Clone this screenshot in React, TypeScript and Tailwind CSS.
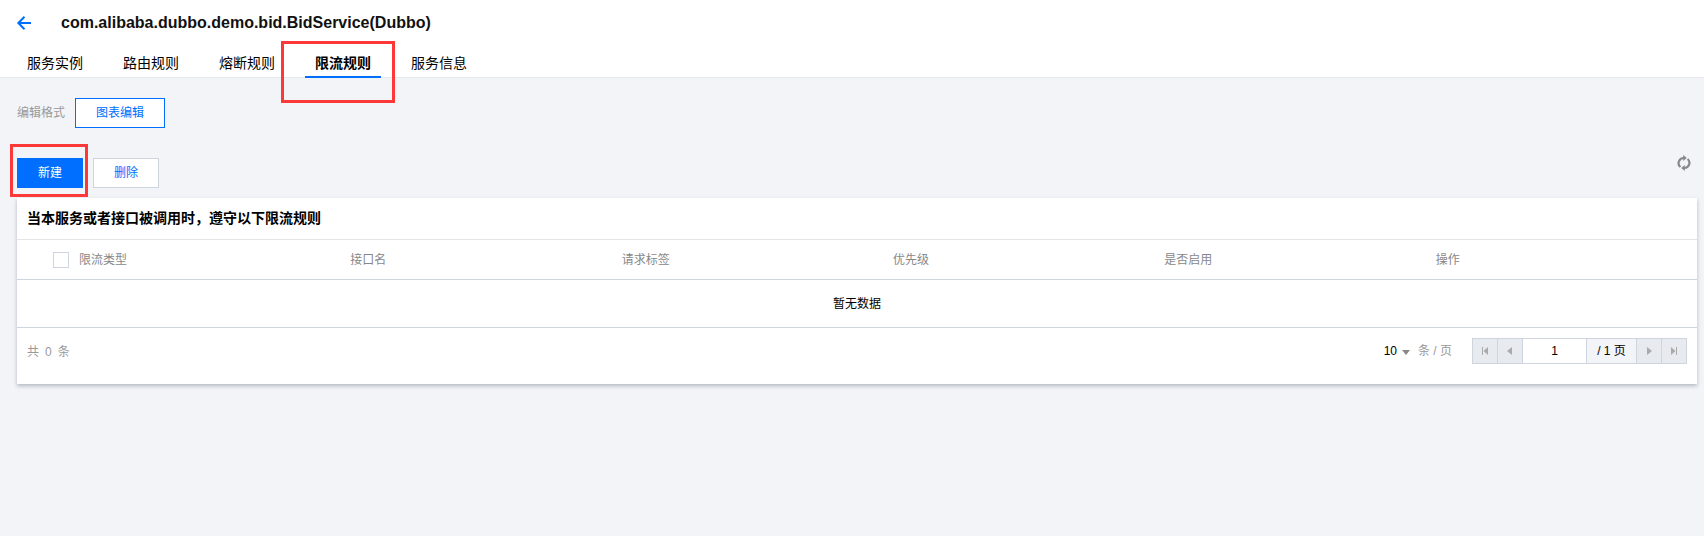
import type { ReactNode } from "react";

const tabs = ["服务实例", "路由规则", "熔断规则", "限流规则", "服务信息"];
const columns = ["限流类型", "接口名", "请求标签", "优先级", "是否启用", "操作"];

function BackIcon() {
  return (
    <svg width="16" height="16" viewBox="0 0 16 16" fill="none" stroke="#006eff" strokeWidth="2">
      <path d="M8.500 1.700 2.300 8l6.200 6.300M2 8h13" />
    </svg>
  );
}

function RefreshIcon() {
  return (
    <svg width="14" height="16" viewBox="0 0 14 16" fill="none" stroke="#888888" strokeWidth="2.2">
      <path d="M3.400 12A5.100 5.100 0 0 1 6.800 3M10.600 4A5.100 5.100 0 0 1 7.200 13" />
      <path d="M6.200 0v6l3.600-3zM7.800 10v6l-3.600-3z" fill="#888888" stroke="none" />
    </svg>
  );
}

function PagerCell({ className, children }: { className: string; children: ReactNode }) {
  return (
    <div className={`flex h-full items-center justify-center border-r border-[#cfd5de] ${className}`}>
      {children}
    </div>
  );
}

function Arrow({ path }: { path: string }) {
  return (
    <svg width="8" height="8" viewBox="0 0 8 8" fill="#aaaaaa">
      <path d={path} />
    </svg>
  );
}

export default function App() {
  return (
    <div className="relative h-[536px] w-[1704px] overflow-hidden bg-[#f2f4f8] font-['Liberation_Sans','Noto_Sans_CJK_SC',sans-serif] text-xs text-black">
      <header className="flex h-[78px] flex-col justify-between border-b border-[#e5e8ed] bg-white">
        <div className="flex h-[45px] items-center pl-4">
          <BackIcon />
          <h1 className="ml-[29px] text-base font-bold leading-6 text-[#111]">
            com.alibaba.dubbo.demo.bid.BidService(Dubbo)
          </h1>
        </div>
        <nav className="-mb-px flex gap-5 pl-[17px] text-sm">
          {tabs.map((tab) => (
            <div
              key={tab}
              className={
                tab === "限流规则"
                  ? "h-[31px] w-[76px] border-b-2 border-[#006eff] text-center font-bold leading-[33px]"
                  : "h-[31px] w-[76px] text-center leading-[33px]"
              }
            >
              {tab}
            </div>
          ))}
        </nav>
      </header>

      <main className="pl-[17px] pr-[7px] pt-5">
        <div className="flex h-[30px] items-center">
          <span className="w-[58px] text-[#999]">编辑格式</span>
          <button className="h-[30px] w-[90px] border border-[#006eff] bg-white text-[#006eff]">图表编辑</button>
        </div>

        <div className="mt-[30px] flex h-[30px] gap-2.5">
          <button className="w-[66px] bg-[#006eff] text-white">新建</button>
          <button className="w-[66px] border border-[#cfd5de] bg-white text-[#006eff]">删除</button>
          <div className="-mt-[3px] ml-auto mr-[6px]">
            <RefreshIcon />
          </div>
        </div>

        <section className="mt-2.5 h-[186px] bg-white shadow-[0_2px_4px_rgba(54,58,80,0.32)]">
          <h2 className="h-[42px] border-b border-[#e5e5e5] pl-2.5 text-sm font-bold leading-10">
            当本服务或者接口被调用时，遵守以下限流规则
          </h2>
          <div className="flex h-10 items-center border-b border-[#cfd5de] text-[#888]">
            <div className="flex w-[52px] shrink-0 justify-end">
              <div className="size-4 border border-[#cfd5de] bg-white" />
            </div>
            {columns.map((column) => (
              <div key={column} className="flex-1 pl-2.5">
                {column}
              </div>
            ))}
          </div>
          <div className="flex h-12 items-center justify-center border-b border-[#cfd5de]">暂无数据</div>
          <div className="flex items-center justify-between px-2.5 pt-2.5">
            <div className="flex gap-1.5 pt-0.5 text-[#999]">
              <span>共</span>
              <span>0</span>
              <span>条</span>
            </div>
            <div className="flex h-[26px] items-center">
              <span>10</span>
              <svg className="ml-[5px] mt-[2px]" width="8" height="5" viewBox="0 0 8 5">
                <path d="M0 0h8L4 5z" fill="#888888" />
              </svg>
              <span className="ml-2 w-[54px] text-[#999]">条 / 页</span>
              <div className="flex h-[26px] w-[215px] border border-r-0 border-[#cfd5de]">
                <PagerCell className="w-[25px] bg-[#e7eaef]">
                  <Arrow path="M1 0h1v8H1zM7 0v8L2.500 4z" />
                </PagerCell>
                <PagerCell className="w-[25px] bg-[#e7eaef]">
                  <Arrow path="M6 0v8L1 4z" />
                </PagerCell>
                <PagerCell className="w-16 bg-white">1</PagerCell>
                <PagerCell className="w-[50px] bg-[#f2f4f8]">/ 1 页</PagerCell>
                <PagerCell className="w-[25px] bg-[#e7eaef]">
                  <Arrow path="M2 0v8l5-4z" />
                </PagerCell>
                <PagerCell className="w-[25px] bg-[#e7eaef]">
                  <Arrow path="M6 0h1v8H6zM1 0v8l4.500-4z" />
                </PagerCell>
              </div>
            </div>
          </div>
        </section>
      </main>

      <div className="pointer-events-none absolute left-[281px] top-[41px] h-[62px] w-[114px] border-3 border-[#fc3838]" />
      <div className="pointer-events-none absolute left-[10px] top-[144px] h-[53px] w-[78px] border-3 border-[#fc3838]" />
    </div>
  );
}
